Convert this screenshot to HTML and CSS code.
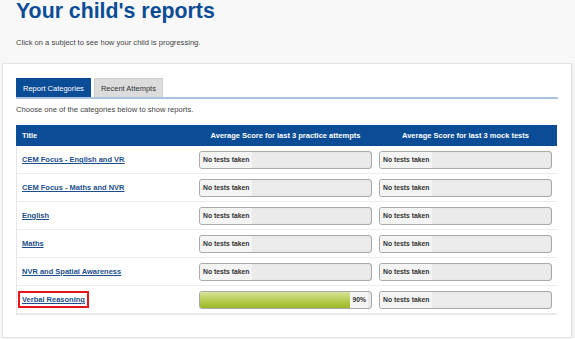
FILE: index.html
```html
<!doctype html>
<html lang="en">
  <head>
    <meta charset="UTF-8" />
    <meta name="viewport" content="width=device-width, initial-scale=1.0" />
    <title>Your child's reports</title>
    <link rel="stylesheet" href="styles.css">
  </head>
  <body>
    <div class="intro">
      <h1>Your child's reports</h1>
      <p>Click on a subject to see how your child is progressing.</p>
    </div>

    <div class="panel">
      <div class="tabs">
        <span class="tab active">Report Categories</span>
        <span class="tab">Recent Attempts</span>
      </div>
      <p class="hint">Choose one of the categories below to show reports.</p>

      <div class="reports">
        <div class="row head">
          <div>Title</div>
          <div class="center">Average Score for last 3 practice attempts</div>
          <div class="center">Average Score for last 3 mock tests</div>
        </div>

        <div class="row">
          <div><a href="#">CEM Focus - English and VR</a></div>
          <div class="score"><span class="label">No tests taken</span></div>
          <div class="score"><span class="label">No tests taken</span></div>
        </div>
        <div class="row">
          <div><a href="#">CEM Focus - Maths and NVR</a></div>
          <div class="score"><span class="label">No tests taken</span></div>
          <div class="score"><span class="label">No tests taken</span></div>
        </div>
        <div class="row">
          <div><a href="#">English</a></div>
          <div class="score"><span class="label">No tests taken</span></div>
          <div class="score"><span class="label">No tests taken</span></div>
        </div>
        <div class="row">
          <div><a href="#">Maths</a></div>
          <div class="score"><span class="label">No tests taken</span></div>
          <div class="score"><span class="label">No tests taken</span></div>
        </div>
        <div class="row">
          <div><a href="#">NVR and Spatial Awareness</a></div>
          <div class="score"><span class="label">No tests taken</span></div>
          <div class="score"><span class="label">No tests taken</span></div>
        </div>
        <div class="row">
          <div><a href="#" class="marked">Verbal Reasoning</a></div>
          <div class="score">
            <span class="fill" style="width: 90%"></span>
            <span class="label pct">90%</span>
          </div>
          <div class="score"><span class="label">No tests taken</span></div>
        </div>
      </div>
    </div>
  </body>
</html>
```

FILE: styles.css
```css
body {
  margin: 0;
  background: #f8f8f8;
  font-family: "Liberation Sans", Arial, sans-serif;
  color: #333;
  overflow: hidden;
}
.intro {
  padding: 0 16px;
  height: 63px;
}
h1 {
  margin: 0;
  font-size: 21.3px;
  line-height: 22px;
  color: #0b4c96;
}
.intro p {
  margin: 16px 0 0;
  font-size: 7.6px;
  color: #444;
}
.panel {
  margin: 0 3px 0 2px;
  padding: 14px 14px 22px 13px;
  background: #fff;
  border: 1px solid #e2e2e2;
  box-shadow: 1px 1px 2px rgba(0, 0, 0, 0.06);
}
.tabs {
  display: flex;
  gap: 3px;
  border-bottom: 2px solid #a9c3e0;
  margin-right: -1px;
}
.tab {
  height: 19px;
  line-height: 19px;
  padding: 0 6px;
  font-size: 7.5px;
  background: #dcdcdc;
  color: #333;
  border: 1px solid #cfcfcf;
  border-bottom: 0;
  box-sizing: border-box;
}
.tab.active {
  background: #0b4c96;
  color: #fff;
  border-color: #0b4c96;
}
.hint {
  margin: 6px 0 11px;
  font-size: 7.6px;
  color: #444;
}
.reports {
  border-left: 1px solid #e6e6e6;
  border-bottom: 1px solid #e6e6e6;
}
.row {
  display: grid;
  grid-template-columns: 1fr 173px 173px;
  column-gap: 7px;
  align-items: center;
  padding: 0 5px 0 5px;
  height: 27px;
  border-bottom: 1px solid #ececec;
  font-size: 7.5px;
}
.row.head {
  height: 21px;
  background: #0b4c96;
  color: #fff;
  font-weight: bold;
  border-bottom: 0;
  margin-left: -1px;
  padding-left: 6px;
}
.center {
  text-align: center;
}
.row a {
  color: #1c4f8a;
  font-weight: bold;
}
.marked {
  outline: 2px solid #e8141b;
  outline-offset: 2px;
}
.score {
  position: relative;
  display: flex;
  align-items: stretch;
  height: 18px;
  box-sizing: border-box;
  border: 1px solid #a9a9a9;
  border-radius: 3px;
  background: #ebebeb;
  box-shadow: inset 0 0 1px #bbb;
  overflow: hidden;
}
.label {
  display: flex;
  align-items: center;
  padding: 0 3px;
  background: #f4f4f4;
  font-size: 6.8px;
  font-weight: bold;
  color: #333;
}
.fill {
  display: block;
  height: 100%;
  background: linear-gradient(#d8e39b, #b4cb4e 55%, #9cb827);
}
.pct {
  position: absolute;
  top: 0;
  bottom: 0;
  right: 3px;
  padding: 0 2px;
}
```
